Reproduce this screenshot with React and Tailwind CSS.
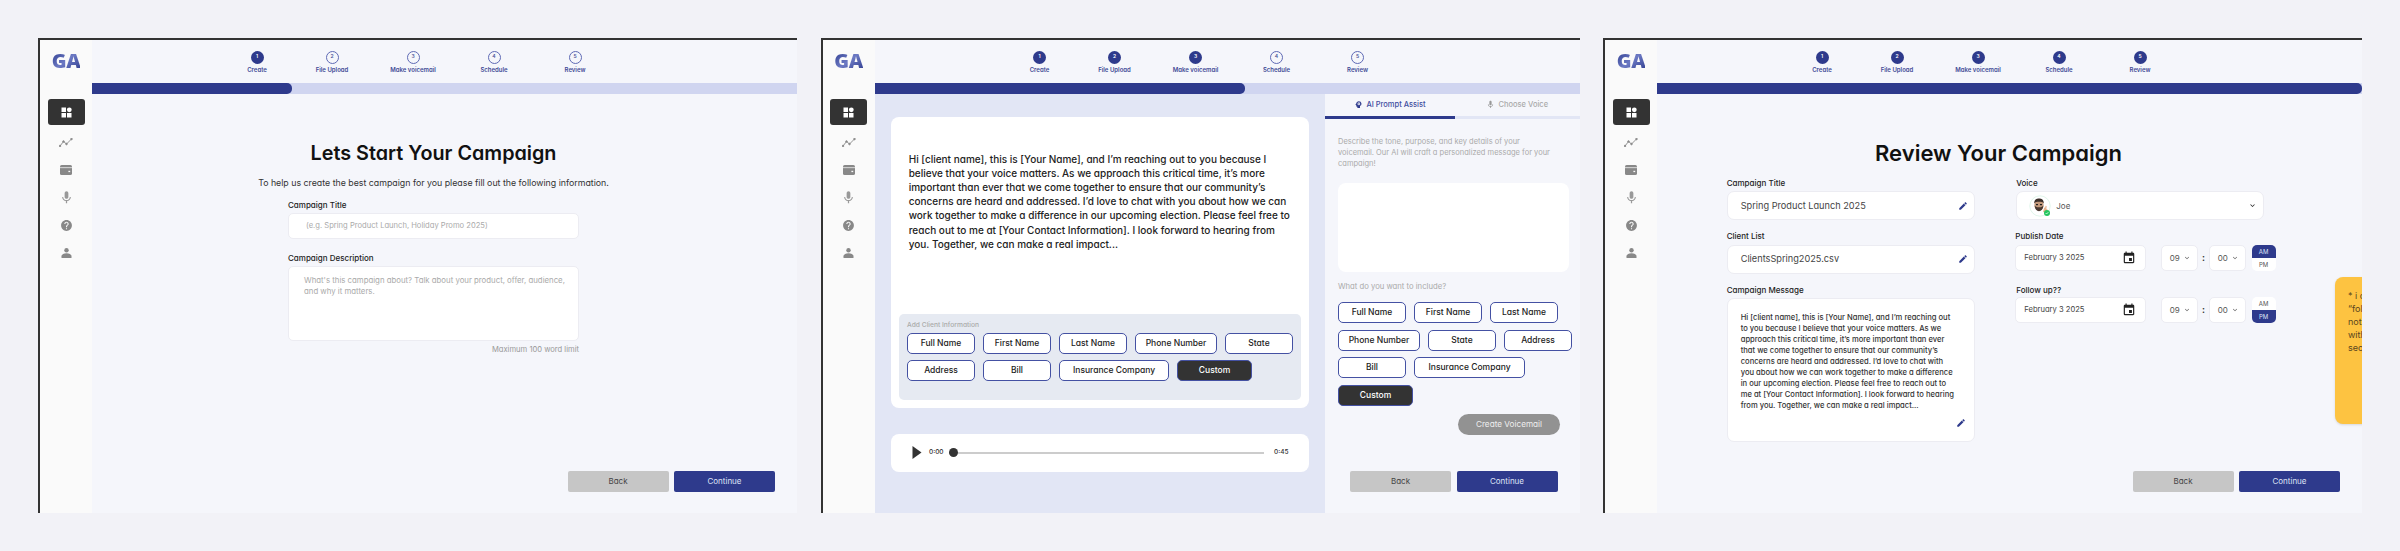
import { MdMic, MdHelp, MdEdit, MdEvent, MdKeyboardArrowDown, MdPsychology } from 'react-icons/md';

const MESSAGE_WIDE = [
  "Hi [client name],  this is [Your Name], and I’m reaching out to you because I",
  "believe that your voice matters. As we approach this critical time, it’s more",
  "important than ever that we come together to ensure that our community’s",
  "concerns are heard and addressed. I’d love to chat with you about how we can",
  "work together to make a difference in our upcoming election. Please feel free to",
  "reach out to me at [Your Contact Information]. I look forward to hearing from",
  "you. Together, we can make a real impact...",
];

const MESSAGE_NARROW = [
  "Hi [client name],  this is [Your Name], and I’m reaching out",
  "to you because I believe that your voice matters. As we",
  "approach this critical time, it’s more important than ever",
  "that we come together to ensure that our community’s",
  "concerns are heard and addressed. I’d love to chat with",
  "you about how we can work together to make a difference",
  "in our upcoming election. Please feel free to reach out to",
  "me at [Your Contact Information]. I look forward to hearing",
  "from you. Together, we can make a real impact...",
];

const STEPS = ['Create', 'File Upload', 'Make voicemail', 'Schedule', 'Review'];

const Sidebar = () => (
  <div className="w-[52px] shrink-0 bg-[#fafafa] flex flex-col items-center">
    {/* Logo */}
    <div className="h-[59px] pt-[10px]">
      <span className="block text-[20px] leading-[22px] font-extrabold tracking-[-0.5px] font-['Open_Sans'] bg-gradient-to-br from-[#2e3a8c] via-[#6d7ac4] to-[#2e3a8c] bg-clip-text text-transparent">GA</span>
    </div>
    <div className="w-[37px] h-[26px] bg-[#333333] rounded-[3px] flex items-center justify-center">
      <svg width="11" height="11" viewBox="0 0 11 11" fill="#fff">
        <rect x="0.5" y="0.5" width="4.5" height="4.5" />
        <circle cx="8.3" cy="2.8" r="2.4" />
        <rect x="0.5" y="6" width="4.5" height="4.5" />
        <rect x="6" y="6" width="4.5" height="4.5" />
      </svg>
    </div>
    <div className="flex flex-col items-center">
      <div className="h-[27.5px] mt-[4px] flex items-center justify-center">
        <svg width="14" height="9" viewBox="0 0 14 9" fill="none" stroke="#888" strokeWidth="0.9">
          <polyline points="1,8 4.5,3.5 7.5,6 12.5,1" />
          <circle cx="1" cy="8" r="0.8" fill="#888" />
          <circle cx="4.5" cy="3.5" r="0.8" fill="#888" />
          <circle cx="7.5" cy="6" r="0.8" fill="#888" />
          <circle cx="12.5" cy="1" r="0.8" fill="#888" />
        </svg>
      </div>
      <div className="h-[27.5px] flex items-center justify-center">
        <svg width="12" height="10" viewBox="0 0 12 10">
          <rect x="0" y="0" width="12" height="10" rx="1.6" fill="#888" />
          <rect x="0" y="2.4" width="12" height="0.7" fill="#fafafa" />
          <rect x="8.4" y="5.8" width="1.8" height="1.3" fill="#fafafa" />
        </svg>
      </div>
      <div className="h-[27.5px] flex items-center justify-center">
        <MdMic size={15} color="#999" />
      </div>
      <div className="h-[27.5px] flex items-center justify-center">
        <MdHelp size={13} color="#888" />
      </div>
      <div className="h-[27.5px] flex items-center justify-center">
        <svg width="11" height="10" viewBox="0 0 11 10" fill="#888">
          <circle cx="5.5" cy="2.2" r="2.2" />
          <path d="M0.5 8.2c0-1.8 2.2-3 5-3s5 1.2 5 3v1.8h-10z" />
        </svg>
      </div>
    </div>
  </div>
);

const Stepper = ({ done }) => (
  <div className="h-[43px] shrink-0 pt-[10.5px] pl-[151px] flex gap-[41px]">
    {STEPS.map((label, i) => (
      <div key={label} className={`flex flex-col items-center ${i === 0 ? 'w-[28px]' : 'w-[40px]'}`}>
        <div className={`w-[13px] h-[13px] rounded-full flex items-center justify-center text-[5px] font-semibold ${i < done ? 'bg-[#2e3a8c] text-white' : 'border border-[#5f6ab5] text-[#4a5499]'}`}>
          {i + 1}
        </div>
        <span className="mt-[2.5px] text-[6px] leading-[8px] font-semibold text-[#3f4a96] whitespace-nowrap">{label}</span>
      </div>
    ))}
  </div>
);

const ProgressBar = ({ fill }) => (
  <div className="h-[10.5px] shrink-0 bg-[#d0d5f0]">
    <div className={`h-full bg-[#2e3a8c] rounded-r-[5px] ${fill}`} />
  </div>
);

const NavButtons = ({ className = '' }) => (
  <div className={`flex gap-[5.5px] text-[8px] ${className}`}>
    <button className="w-[101px] h-[21.5px] rounded-[2px] bg-[#c6c6c6] text-[#444]">Back</button>
    <button className="w-[101px] h-[21.5px] rounded-[2px] bg-[#2e3a8c] text-[#dfe3f7]">Continue</button>
  </div>
);

const Pill = ({ w, dark, children }) => (
  <div className={`h-[21px] rounded-[5px] border-[1.5px] border-[#4451a3] flex items-center justify-center text-[8.5px] font-medium whitespace-nowrap ${w} ${dark ? 'bg-[#333333] text-white' : 'bg-white text-[#222]'}`}>
    {children}
  </div>
);

const Frame = ({ children }) => (
  <div className="flex-1 h-[475px] border-l-2 border-t-2 border-[#333333] flex overflow-hidden relative">
    <Sidebar />
    <div className="flex-1 min-w-0 flex flex-col bg-[#f5f6fb]">{children}</div>
  </div>
);

const StartCampaign = () => (
  <Frame>
    <Stepper done={1} />
    <ProgressBar fill="w-[200px]" />
    <div className="flex-1 pr-[22px] flex flex-col">
      <div className="flex flex-col items-center">
        <h1 className="mt-[44px] text-[19.8px] leading-[30px] font-semibold text-[#111]">Lets Start Your Campaign</h1>
        <p className="mt-[8px] text-[8.8px] leading-[14px] text-[#333]">To help us create the best campaign for you please fill out the following information.</p>
        <div className="w-[291px] mt-[9px]">
          <label className="block text-[8px] leading-[12px] font-medium text-[#222]">Campaign Title</label>
          <div className="mt-[2px] h-[26px] bg-white border border-[#ececf2] rounded-[5px] pl-[17px] flex items-center text-[7.6px] text-[#aaa]">(e.g. Spring Product Launch, Holiday Promo 2025)</div>
          <label className="block mt-[13px] text-[8px] leading-[12px] font-medium text-[#222]">Campaign Description</label>
          <div className="mt-[2px] h-[75px] bg-white border border-[#ececf2] rounded-[5px] pl-[15px] pt-[8px] text-[7.8px] leading-[11px] text-[#aaa] whitespace-nowrap">
            What's this campaign about? Talk about your product, offer, audience,<br />and why it matters.
          </div>
          <p className="mt-[3px] text-right text-[7.6px] leading-[12px] text-[#999]">Maximum 100 word limit</p>
        </div>
      </div>
      <NavButtons className="mt-auto mb-[21px] justify-end" />
    </div>
  </Frame>
);

const MakeVoicemail = () => (
  <Frame>
    <Stepper done={3} />
    <ProgressBar fill="w-[370px]" />
    <div className="flex-1 flex min-h-0">
      {/* Left panel */}
      <div className="w-[450.5px] shrink-0 bg-[#e2e6f5] pl-[16.5px] pr-[16.5px] pt-[23.5px]">
        <div className="h-[291px] bg-white rounded-[8px] p-[8px] flex flex-col">
          <p className="pl-[9.7px] pt-[26.5px] text-[10px] leading-[14.2px] font-medium text-[#222] whitespace-nowrap">
            {MESSAGE_WIDE.map((line) => (
              <span key={line} className="block">{line}</span>
            ))}
          </p>
          <div className="mt-auto h-[86px] bg-[#e6eaf2] rounded-[5px] pl-[8px] pr-[4px] pt-[7px]">
            <p className="text-[6.7px] leading-[8px] text-[#aaa] font-medium">Add Client Information</p>
            <div className="mt-[3.5px] flex flex-wrap gap-x-[8px] gap-y-[6.5px]">
              <Pill w="w-[68px]">Full Name</Pill>
              <Pill w="w-[68px]">First Name</Pill>
              <Pill w="w-[68px]">Last Name</Pill>
              <Pill w="w-[82px]">Phone Number</Pill>
              <Pill w="w-[68px]">State</Pill>
              <Pill w="w-[68px]">Address</Pill>
              <Pill w="w-[68px]">Bill</Pill>
              <Pill w="w-[110px]">Insurance Company</Pill>
              <Pill w="w-[75px]" dark>Custom</Pill>
            </div>
          </div>
        </div>
        {/* Audio player */}
        <div className="mt-[25.5px] h-[38.5px] bg-white rounded-[8px] pl-[21px] pr-[20.5px] flex items-center text-[6.5px] font-medium text-[#333]">
          <svg width="10" height="13" viewBox="0 0 10 13" fill="#333" className="shrink-0">
            <path d="M0.5 0l9 6.5-9 6.5z" />
          </svg>
          <span className="ml-[7px] w-[15px]">0:00</span>
          <div className="ml-[5px] flex-1 h-[1.5px] bg-[#cccccc] relative">
            <div className="absolute left-0 top-[-3.75px] w-[9px] h-[9px] rounded-full bg-[#333333]" />
          </div>
          <span className="ml-[10px] w-[14px]">0:45</span>
        </div>
      </div>
      {/* Right panel */}
      <div className="flex-1 min-w-0">
        <div className="flex text-[7.5px] font-medium">
          <div className="w-[130px] h-[25px] border-b-[3px] border-[#2e3a8c] flex items-center justify-center gap-[3px] text-[#3f4da0]">
            <MdPsychology size={9} color="#2e3a8c" />
            AI Prompt Assist
          </div>
          <div className="flex-1 h-[25px] border-b-[3px] border-[#e2e6f5] flex items-center justify-center gap-[3px] text-[#aaa]">
            <MdMic size={9} color="#999" />
            Choose Voice
          </div>
        </div>
        <div className="pl-[13px] pr-[11px]">
          <p className="mt-[17px] text-[7.5px] leading-[11px] text-[#aaa] whitespace-nowrap">
            Describe the tone, purpose, and key details of your<br />
            voicemail. Our AI will craft a personalized message for your<br />
            campaign!
          </p>
          <div className="mt-[14px] h-[89px] bg-white rounded-[8px]" />
          <p className="mt-[9px] text-[7.7px] leading-[11px] text-[#aaa]">What do you want to include?</p>
          <div className="mt-[10.5px] w-[236px] flex flex-wrap gap-x-[8px] gap-y-[6.5px]">
            <Pill w="w-[68px]">Full Name</Pill>
            <Pill w="w-[68px]">First Name</Pill>
            <Pill w="w-[68px]">Last Name</Pill>
            <Pill w="w-[82px]">Phone Number</Pill>
            <Pill w="w-[68px]">State</Pill>
            <Pill w="w-[68px]">Address</Pill>
            <Pill w="w-[68px]">Bill</Pill>
            <Pill w="w-[111px]">Insurance Company</Pill>
            <Pill w="w-[75px]" dark>Custom</Pill>
          </div>
          <div className="mt-[8px] ml-[120px] w-[102px] h-[21px] rounded-full bg-[#929292] text-[#eeeeee] text-[8.2px] flex items-center justify-center">Create Voicemail</div>
          <NavButtons className="mt-[36px] ml-[12px]" />
        </div>
      </div>
    </div>
  </Frame>
);

const Field = ({ label, value }) => (
  <div>
    <label className="block text-[8px] leading-[12px] font-medium text-[#222]">{label}</label>
    <div className="mt-[2.3px] h-[29px] bg-white border border-[#ececf2] rounded-[7px] pl-[13px] pr-[6px] flex items-center justify-between text-[9.2px] text-[#444]">
      {value}
      <MdEdit size={10} color="#2e3a8c" />
    </div>
  </div>
);

const TimeSelect = ({ value }) => (
  <div className="w-[37.5px] h-[25.5px] bg-white border border-[#ececf2] rounded-[5px] pl-[8px] pr-[6px] flex items-center justify-between text-[8px] text-[#555]">
    {value}
    <MdKeyboardArrowDown size={8} color="#555" />
  </div>
);

const AmPm = ({ active }) => (
  <div className="w-[24px] h-[25.5px] rounded-[5px] overflow-hidden bg-white text-[6px] flex flex-col text-[#555]">
    <div className={`flex-1 flex items-center justify-center ${active === 'AM' ? 'bg-[#2e3a8c] text-[#dfe3f7]' : ''}`}>AM</div>
    <div className={`flex-1 flex items-center justify-center ${active === 'PM' ? 'bg-[#2e3a8c] text-[#dfe3f7]' : ''}`}>PM</div>
  </div>
);

const ScheduleRow = ({ active }) => (
  <div className="flex items-center">
    <div className="w-[131px] h-[25.5px] bg-white border border-[#ececf2] rounded-[5px] pl-[8px] pr-[9px] flex items-center justify-between text-[7.6px] text-[#444]">
      February 3 2025
      <MdEvent size={14} color="#222" />
    </div>
    <div className="ml-[14.4px]"><TimeSelect value="09" /></div>
    <span className="w-[10.5px] text-center text-[9px] font-bold text-[#333]">:</span>
    <TimeSelect value="00" />
    <div className="ml-[5.4px]"><AmPm active={active} /></div>
  </div>
);

const Avatar = () => (
  <svg width="22" height="22" viewBox="0 0 22 22">
    <circle cx="11" cy="11" r="10.2" fill="#fff" stroke="#d8f3e4" strokeWidth="0.8" />
    <ellipse cx="10" cy="10" rx="4.6" ry="5.6" fill="#c49a7c" />
    <path d="M5.2 8.5C5 4.8 7.5 3.5 10 3.5s5 1.3 4.8 5c-1-1.6-2.5-1.8-4.8-1.8s-3.8.2-4.8 1.8z" fill="#3a2f2a" />
    <path d="M5.6 10.5c.2 3.8 2.2 5.7 4.4 5.7s4.2-1.9 4.4-5.7c-.8 1.4-2 1.7-4.4 1.7s-3.6-.3-4.4-1.7z" fill="#4a3a32" />
    <rect x="7" y="9" width="2" height="1.2" fill="#222" />
    <rect x="11" y="9" width="2" height="1.2" fill="#222" />
    <path d="M14 17l1.2-4.4 1 .2.4-2 1 .3-.2 3.2 1-.2-.6 3.7z" fill="#e8b48e" />
    <circle cx="18" cy="18" r="3" fill="#22c55e" />
    <path d="M16.6 18l1 1 1.8-1.9" fill="none" stroke="#fff" strokeWidth="0.7" />
  </svg>
);

const ReviewCampaign = () => (
  <Frame>
    <Stepper done={5} />
    <ProgressBar fill="w-full" />
    <div className="flex-1 flex flex-col pr-[22px]">
      <h1 className="mt-[44px] text-center text-[22px] leading-[30px] font-semibold text-[#111]">Review Your Campaign</h1>
      <div className="mt-[9.7px] ml-[69.7px] flex gap-[40.6px]">
        {/* Left column */}
        <div className="w-[248px] flex flex-col gap-[10px]">
          <Field label="Campaign Title" value="Spring Product Launch 2025" />
          <Field label="Client List" value="ClientsSpring2025.csv" />
          <div>
            <label className="block text-[8px] leading-[12px] font-medium text-[#222]">Campaign Message</label>
            <div className="mt-[2.3px] h-[144px] bg-white border border-[#ececf2] rounded-[7px] pl-[13px] pr-[8px] pt-[13px] flex flex-col">
              <p className="text-[7.6px] leading-[11px] font-medium text-[#333] whitespace-nowrap">
                {MESSAGE_NARROW.map((line) => (
                  <span key={line} className="block">{line}</span>
                ))}
              </p>
              <div className="mt-[7px] self-end"><MdEdit size={10} color="#2e3a8c" /></div>
            </div>
          </div>
        </div>
        {/* Right column */}
        <div className="flex flex-col">
          <label className="block pl-[1px] text-[8px] leading-[12px] font-medium text-[#222]">Voice</label>
          <div className="mt-[2.3px] ml-[1px] w-[247.5px] h-[29px] bg-white border border-[#ececf2] rounded-[7px] pl-[12px] pr-[6px] flex items-center text-[8px] text-[#555]">
            <Avatar />
            <span className="ml-[5px]">Joe</span>
            <MdKeyboardArrowDown size={9} color="#222" className="ml-auto" />
          </div>
          <label className="block mt-[10px] text-[8px] leading-[12px] font-medium text-[#222]">Publish Date</label>
          <div className="mt-[2.7px]"><ScheduleRow active="AM" /></div>
          <label className="block mt-[13px] pl-[1px] text-[8px] leading-[12px] font-medium text-[#222]">Follow up??</label>
          <div className="mt-[1.7px]"><ScheduleRow active="PM" /></div>
        </div>
      </div>
      <NavButtons className="mt-auto mb-[21px] justify-end" />
    </div>
    {/* Sticky note hanging past the edge of the frame */}
    <div className="absolute left-[730px] top-[237px] w-[160px] h-[147px] bg-[#fdc341] rounded-[8px] pl-[13px] pt-[12px] text-[9px] leading-[13px] text-[#5a4520] whitespace-nowrap shadow-sm">
      * i changed<br />“follow up”<br />not<br />with<br />sequence
    </div>
  </Frame>
);

export default function App() {
  return (
    <div className="w-[2400px] h-[551px] bg-[#f2f2f7] px-[38px] pt-[38px] flex gap-[23.5px] font-['Inter',sans-serif] [font-feature-settings:'cv11'] overflow-hidden">
      <StartCampaign />
      <MakeVoicemail />
      <ReviewCampaign />
    </div>
  );
}
